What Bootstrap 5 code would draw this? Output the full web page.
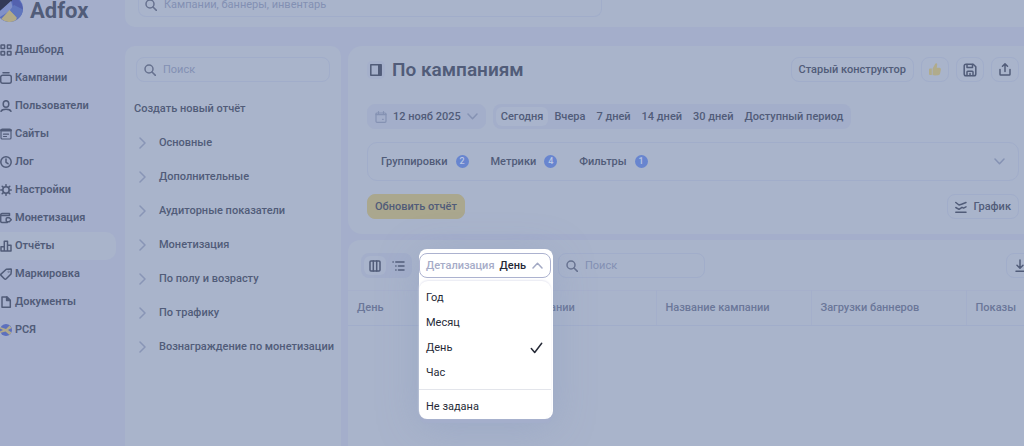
<!DOCTYPE html>
<html lang="ru">
<head>
<meta charset="utf-8">
<meta name="viewport" content="width=device-width, initial-scale=1">
<title>Adfox — Отчёты</title>
<link href="https://cdn.jsdelivr.net/npm/bootstrap@5.3.0/dist/css/bootstrap.min.css" rel="stylesheet">
<style>
  :root { --page:#a4aecb; --panel:#a9b4cb; --line:#a1adca; --ink:#515c79; --dim:#8390b3; --pill:#a3aeca; --icon:#66718f; }
  body { background:var(--page); color:var(--ink); font-family:Roboto,"Noto Sans",sans-serif; font-size:11px; line-height:16px; overflow:hidden; }
  svg { flex:none; fill:none; stroke:currentColor; stroke-width:1.5; stroke-linecap:round; stroke-linejoin:round; display:block; }
  svg.solid { stroke:none; }
  svg.thin { stroke-width:1.2; }
  svg.soft { color:#8592b3; }
  a { color:inherit; text-decoration:none; }
  button { font-size:11px; line-height:16px; color:inherit; }
  .side { width:125px; padding-right:9px; }
  .brand { height:30px; gap:7px; margin-bottom:6px; }
  .brand-name { font:700 22px/22px Roboto,sans-serif; }
  .side-link { height:28px; gap:3px; font-weight:600; border-radius:0 10px 10px 0; }
  .side-link.active { background:var(--panel); }
  .panel { background:var(--panel); }
  .topbar { height:27px; border-radius:0 0 0 10px; padding:0 13px 10px; margin-bottom:19px; }
  .field { border:1px solid var(--line); border-radius:8px; height:25px; gap:7px; padding:0 7px; }
  .field input { border:0; outline:0; background:none; padding:0; min-width:0; width:100%; font-size:11px; line-height:16px; color:inherit; }
  .field input::placeholder { color:var(--dim); opacity:1; }
  .field svg { color:var(--icon); }
  .top-field { width:464px; max-width:100%; border-top:0; border-radius:0 0 8px 8px; height:17px; padding:0 6px 6px; }
  .cats { width:216px; border-radius:10px 10px 0 0; padding:11px 11px 0; }
  .cats h2 { font-size:11px; line-height:16px; font-weight:500; margin:19px -2px 9px; }
  .cat-link { height:34px; gap:12px; padding-left:2px; font-weight:500; white-space:nowrap; }
  .cat-link svg { color:#8995b6; }
  .report { border-radius:14px 0 0 14px; padding:11px 5px 15px 19px; }
  .report h1 { font-size:19px; line-height:24px; font-weight:600; margin:0; }
  .tile { width:18px; height:18px; border-radius:5px; background:#a5b0cb; }
  .ctl { height:25px; border:1px solid var(--line); border-radius:8px; background:none; padding:0 7px; font-weight:500; white-space:nowrap; }
  .ctl-icon { width:28px; padding:0; }
  .pill { background:var(--pill); border-color:var(--pill); }
  .seg { background:var(--pill); border-radius:8px; height:25px; padding:3px; gap:1px; }
  .seg button { border:0; background:none; border-radius:6px; height:19px; padding:0 5px; line-height:19px; font-weight:500; white-space:nowrap; }
  .seg button.active { background:#a9b4cc; }
  .groups { border:1px solid var(--line); border-radius:10px; height:39px; padding:0 13px; gap:22px; margin:13px 0; }
  .groups button { border:0; background:none; padding:0; font-weight:500; gap:8px; }
  .count { width:13px; height:13px; border-radius:50%; background:#6885cf; color:#b9c6e4; font-size:9px; line-height:13px; text-align:center; }
  .ctl-main { background:#aaa78e; border-color:#aaa78e; }
  .results { border-radius:12px 0 0 0; margin-top:6px; }
  .tools { padding:13px 0 12px 13px; margin-right:-10px; gap:7px; }
  .view button { width:22px; padding:0; }
  .detail { width:132px; }
  .detail-btn { width:100%; height:25px; border:1px solid #acb2cf; border-radius:8px; background:#fff; padding:0 7px 0 6px; color:#262a37; font-weight:500; gap:5px; z-index:3; }
  .detail-btn span:first-child { color:#a6acc8; }
  .detail-btn svg { color:#a3a9c4; }
  .spot { left:0; top:-4px; width:134px; z-index:2; border-radius:8px; background:#fff; padding-top:32px; box-shadow:0 5px 1px -1px #a4aecb, 0 8px 40px rgba(130,145,185,.35); }
  .detail-list { color:#262a37; font-weight:500; padding-top:4px; margin-right:2px; border-radius:9px; box-shadow:0 -1px 2px #e7e8f2; }
  .detail-list button { width:100%; height:25px; border:0; background:none; padding:0 8px 0 7px; text-align:left; }
  .detail-list hr { margin:4px 0; border-color:#c8cbd8; opacity:.5; }
  .find { width:147px; }
  .grid-table { table-layout:fixed; width:100%; margin:0; }
  .grid-table th { height:35px; padding:0 9px; font-weight:500; color:#6b7799; border-top:1px solid #a6b0cb; border-bottom:1px solid var(--line); border-right:1px solid #a4afcb; white-space:nowrap; }
  .grid-table th:last-child { border-right:0; }
  .w-col { width:155px; }
  .w-first { width:153px; }
</style>
</head>
<body>
<div class="d-flex min-vh-100">
  <nav class="side flex-shrink-0" aria-label="Разделы">
    <a href="#" class="brand d-flex align-items-start">
      <svg class="solid" width="23" height="22" viewBox="0 0 23 22"><circle cx="9.500" cy="8.500" r="13.500" fill="#5b70bd"/><path d="M0 0H13L0 11Z" fill="#333a58"/><path d="M11 1 0 11v6L13 9Z" fill="#8191c8"/><path d="M9.500 10 1.200 19q7 5.500 15 1l.8-3Z" fill="#b2aa87"/><path d="M12 0l2 9 9 1Q22.500 4 18.500 0Z" fill="#5361ae"/><path d="m10 10 7.500 8.500q5-3 5.500-9L14 5Z" fill="#6076bd"/></svg>
      <span class="brand-name">Adfox</span>
    </a>
    <a href="#" class="side-link d-flex align-items-center"><svg width="12" height="12" viewBox="0 0 12 12"><rect x="1" y="1" width="3.600" height="3.600" rx=".5"/><rect x="7.400" y="1" width="3.600" height="3.600" rx=".5"/><rect x="1" y="7.400" width="3.600" height="3.600" rx=".5"/><rect x="7.400" y="7.400" width="3.600" height="3.600" rx=".5"/></svg>Дашборд</a>
    <a href="#" class="side-link d-flex align-items-center"><svg width="12" height="12" viewBox="0 0 12 12"><path d="M3 .8h6"/><rect x=".7" y="3.200" width="10.600" height="8" rx="2"/></svg>Кампании</a>
    <a href="#" class="side-link d-flex align-items-center"><svg width="12" height="12" viewBox="0 0 12 12"><ellipse cx="6" cy="4" rx="2.800" ry="3.300"/><path d="M1 11.300q1-2 5-2t5 2"/></svg>Пользователи</a>
    <a href="#" class="side-link d-flex align-items-center"><svg class="thin" width="12" height="12" viewBox="0 0 12 12"><rect x="1" y="1" width="10" height="10" rx="1.300"/><path d="M1.500 2.300h9" stroke-width="2.500"/><path d="M3.500 6.200h5M3.500 8.500h3"/></svg>Сайты</a>
    <a href="#" class="side-link d-flex align-items-center"><svg width="12" height="12" viewBox="0 0 12 12"><circle cx="6" cy="6" r="5.200"/><path d="M6 3v3.300l2 1.400"/></svg>Лог</a>
    <a href="#" class="side-link d-flex align-items-center"><svg width="12" height="12" viewBox="0 0 12 12"><circle cx="6" cy="6" r="3.200"/><path d="M6 2.600V.7M6 9.400v1.900M2.600 6H.7M9.400 6h1.900M3.600 3.600 2.200 2.200M8.400 3.600l1.400-1.400M3.600 8.400 2.200 9.800M8.400 8.400l1.400 1.400"/></svg>Настройки</a>
    <a href="#" class="side-link d-flex align-items-center"><svg width="12" height="12" viewBox="0 0 12 12"><path d="M9.500 3.300V1.600H2Q.7 1.600.7 3v6q0 1.600 1.600 1.600h5M1 3.500h8.500M11.300 7.700 9.300 5.700H7.200q-1 0-1 1v2q0 1 1 1h2.100Z"/></svg>Монетизация</a>
    <a href="#" class="side-link active d-flex align-items-center" aria-current="page"><svg width="12" height="12" viewBox="0 0 12 12"><path d="M4.300 11V1.200h3.200V11M4.300 6.800H1V11h10V5.200H7.500"/></svg>Отчёты</a>
    <a href="#" class="side-link d-flex align-items-center"><svg width="12" height="12" viewBox="0 0 12 12"><path d="M6.300 1.300 10.800.9q.6 0 .6.6L11 6l-5 5Q5.300 11.500 4.600 11L1 7.400q-.6-.7 0-1.300Z"/><circle cx="8.600" cy="3.700" r=".2"/></svg>Маркировка</a>
    <a href="#" class="side-link d-flex align-items-center"><svg width="12" height="12" viewBox="0 0 12 12"><path d="M2 .9h4.800L10.300 4.400V11.200H2Z"/><path d="M6.600 1v3.600h3.500Z" fill="currentColor"/></svg>Документы</a>
    <a href="#" class="side-link d-flex align-items-center"><svg class="solid" width="12" height="12" viewBox="0 0 12 12"><circle cx="6" cy="6" r="6" fill="#5d70bd"/><path d="M0 3 6 5 9.500 1.500 11.500 4 8 6l3.500 2.500L9.500 11 5.500 7.500 0 9Z" fill="#b0a98c"/><path d="M0 4.500 3 6 0 7.500Z" fill="#5d70bd"/></svg>РСЯ</a>
  </nav>

  <div class="flex-grow-1 d-flex flex-column" style="min-width:0">
    <header class="panel topbar">
      <label class="field top-field d-flex align-items-center"><svg width="12" height="12" viewBox="0 0 12 12"><circle cx="5" cy="5" r="4"/><path d="m8 8 3.400 3.400"/></svg><input type="search" placeholder="Кампании, баннеры, инвентарь" aria-label="Поиск по сервису"></label>
    </header>

    <div class="d-flex flex-grow-1">
      <aside class="panel cats flex-shrink-0">
        <label class="field d-flex align-items-center"><svg width="12" height="12" viewBox="0 0 12 12"><circle cx="5" cy="5" r="4"/><path d="m8 8 3.400 3.400"/></svg><input type="search" placeholder="Поиск" aria-label="Поиск отчёта"></label>
        <h2>Создать новый отчёт</h2>
        <a href="#" class="cat-link d-flex align-items-center"><svg width="9" height="12" viewBox="0 0 9 12"><path d="m2 1 5 5-5 5"/></svg>Основные</a>
        <a href="#" class="cat-link d-flex align-items-center"><svg width="9" height="12" viewBox="0 0 9 12"><path d="m2 1 5 5-5 5"/></svg>Дополнительные</a>
        <a href="#" class="cat-link d-flex align-items-center"><svg width="9" height="12" viewBox="0 0 9 12"><path d="m2 1 5 5-5 5"/></svg>Аудиторные показатели</a>
        <a href="#" class="cat-link d-flex align-items-center"><svg width="9" height="12" viewBox="0 0 9 12"><path d="m2 1 5 5-5 5"/></svg>Монетизация</a>
        <a href="#" class="cat-link d-flex align-items-center"><svg width="9" height="12" viewBox="0 0 9 12"><path d="m2 1 5 5-5 5"/></svg>По полу и возрасту</a>
        <a href="#" class="cat-link d-flex align-items-center"><svg width="9" height="12" viewBox="0 0 9 12"><path d="m2 1 5 5-5 5"/></svg>По трафику</a>
        <a href="#" class="cat-link d-flex align-items-center"><svg width="9" height="12" viewBox="0 0 9 12"><path d="m2 1 5 5-5 5"/></svg>Вознаграждение по монетизации</a>
      </aside>

      <main class="flex-grow-1 d-flex flex-column" style="min-width:0; margin-left:7px">
        <section class="panel report">
          <div class="d-flex align-items-center" style="height:25px; gap:7px; margin-bottom:22px">
            <span class="tile d-flex align-items-center justify-content-center"><svg width="12" height="12" viewBox="0 0 12 12"><rect x=".8" y=".8" width="10.400" height="10.400"/><path d="M8 1h3v10H8Z" fill="currentColor" stroke="none"/></svg></span>
            <h1 class="me-auto">По кампаниям</h1>
            <button type="button" class="ctl">Старый конструктор</button>
            <button type="button" class="ctl ctl-icon d-flex align-items-center justify-content-center" aria-label="Нравится"><svg class="solid" width="12" height="13" viewBox="0 0 12 13"><path fill="#b0ab8b" d="M0 6.500q0-1 1-1h1.800V12H1q-1 0-1-1ZM3.600 5.500 6.300.8Q6.700 0 7.500.3q1 .4.700 1.700L7.700 4.700h2.800q1.500.2 1.400 1.700l-.8 4Q10.700 12 9.200 12.200L6 12.500 3.600 12Z"/></svg></button>
            <button type="button" class="ctl ctl-icon d-flex align-items-center justify-content-center" aria-label="Сохранить"><svg width="14" height="14" viewBox="0 0 14 14"><path d="M3 1.200h7.200L12.800 3.800V11q0 1.800-1.800 1.800H3Q1.200 12.800 1.200 11V3Q1.200 1.200 3 1.200Z"/><path d="M4 1.500v3h5.500v-3M4 12.500V9q0-.8.8-.8h4.400q.8 0 .8.800v3.500M7 10.500v2"/></svg></button>
            <button type="button" class="ctl ctl-icon d-flex align-items-center justify-content-center" aria-label="Поделиться"><svg width="12" height="13" viewBox="0 0 12 13"><path d="M1 6.500v4.700q0 .8.800.8h8.400q.8 0 .8-.8V6.500M6 8.500V1M3.500 3.300 6 .9l2.500 2.400"/></svg></button>
          </div>

          <div class="d-flex" style="gap:7px">
            <button type="button" class="ctl pill d-flex align-items-center" style="gap:6px"><svg class="thin soft" width="12" height="12" viewBox="0 0 12 12"><rect x="1" y="2" width="10" height="9.300" rx="1"/><path d="M1 3.600h10M3.500.6v2M8.500.6v2M7.500 8.300h.8"/></svg><span>12 нояб 2025</span><svg class="soft" width="11" height="7" viewBox="0 0 11 7"><path d="m1 1 4.500 4.700L10 1"/></svg></button>
            <div class="seg d-flex" role="group" aria-label="Период">
              <button type="button" class="active">Сегодня</button>
              <button type="button">Вчера</button>
              <button type="button">7 дней</button>
              <button type="button">14 дней</button>
              <button type="button">30 дней</button>
              <button type="button">Доступный период</button>
            </div>
          </div>

          <div class="groups d-flex align-items-center">
            <button type="button" class="d-flex align-items-center">Группировки <span class="count">2</span></button>
            <button type="button" class="d-flex align-items-center">Метрики <span class="count">4</span></button>
            <button type="button" class="d-flex align-items-center">Фильтры <span class="count">1</span></button>
            <button type="button" class="ms-auto" aria-label="Развернуть"><svg class="soft" width="11" height="7" viewBox="0 0 11 7"><path d="m1 1 4.500 4.700L10 1"/></svg></button>
          </div>

          <div class="d-flex justify-content-between">
            <button type="button" class="ctl ctl-main">Обновить отчёт</button>
            <button type="button" class="ctl d-flex align-items-center" style="gap:6px"><svg width="12" height="12" viewBox="0 0 12 12"><path d="M.8 1.500 4 4l2.500-.8L11 1.500M.8 6.500 4 8.300l3-2 1.500.8L11 5.800M.8 11.200H11"/></svg>График</button>
          </div>
        </section>

        <section class="panel results flex-grow-1">
          <div class="tools d-flex">
            <div class="seg view d-flex" role="group" aria-label="Вид">
              <button type="button" class="active d-flex align-items-center justify-content-center" aria-label="Таблица"><svg width="12" height="12" viewBox="0 0 12 12"><rect x="1" y="1" width="10" height="10" rx="1"/><path d="M4.300 1v10M7.700 1v10"/></svg></button>
              <button type="button" class="d-flex align-items-center justify-content-center" aria-label="Дерево"><svg width="13" height="10" viewBox="0 0 13 10"><path d="M1 1h.2M3.800 1H12M3.800 5H4M6.500 5H12M3.800 9H4M6.500 9H12"/></svg></button>
            </div>
            <div class="detail position-relative">
              <button type="button" class="detail-btn position-relative d-flex align-items-center" aria-expanded="true" aria-haspopup="listbox"><span>Детализация</span><span>День</span><svg class="ms-auto" width="11" height="7" viewBox="0 0 11 7"><path d="m1 6 4.500-4.700L10 6"/></svg></button>
              <div class="spot position-absolute">
                <div class="detail-list" role="listbox" aria-label="Детализация">
                  <button type="button" role="option">Год</button>
                  <button type="button" role="option">Месяц</button>
                  <button type="button" role="option" aria-selected="true" class="d-flex align-items-center justify-content-between">День<svg width="13" height="12" viewBox="0 0 13 12"><path d="m1.300 6.500 3.400 4L11.700 1.300"/></svg></button>
                  <button type="button" role="option">Час</button>
                  <hr>
                  <button type="button" role="option">Не задана</button>
                </div>
              </div>
            </div>
            <label class="field find d-flex align-items-center"><svg width="12" height="12" viewBox="0 0 12 12"><circle cx="5" cy="5" r="4"/><path d="m8 8 3.400 3.400"/></svg><input type="search" placeholder="Поиск" aria-label="Поиск в таблице"></label>
            <button type="button" class="ctl ctl-icon ms-auto d-flex align-items-center justify-content-center" aria-label="Скачать"><svg width="10" height="13" viewBox="0 0 10 13"><path d="M5 1v8M2 6.300l3 3 3-3M1 12.200h8"/></svg></button>
          </div>
          <table class="grid-table">
            <thead><tr><th class="w-first" scope="col">День</th><th class="w-col" scope="col">ID кампании</th><th class="w-col" scope="col">Название кампании</th><th class="w-col" scope="col">Загрузки баннеров</th><th scope="col">Показы</th></tr></thead>
          </table>
        </section>
      </main>
    </div>
  </div>
</div>
<script src="https://cdn.jsdelivr.net/npm/bootstrap@5.3.0/dist/js/bootstrap.bundle.min.js"></script>
</body>
</html>
